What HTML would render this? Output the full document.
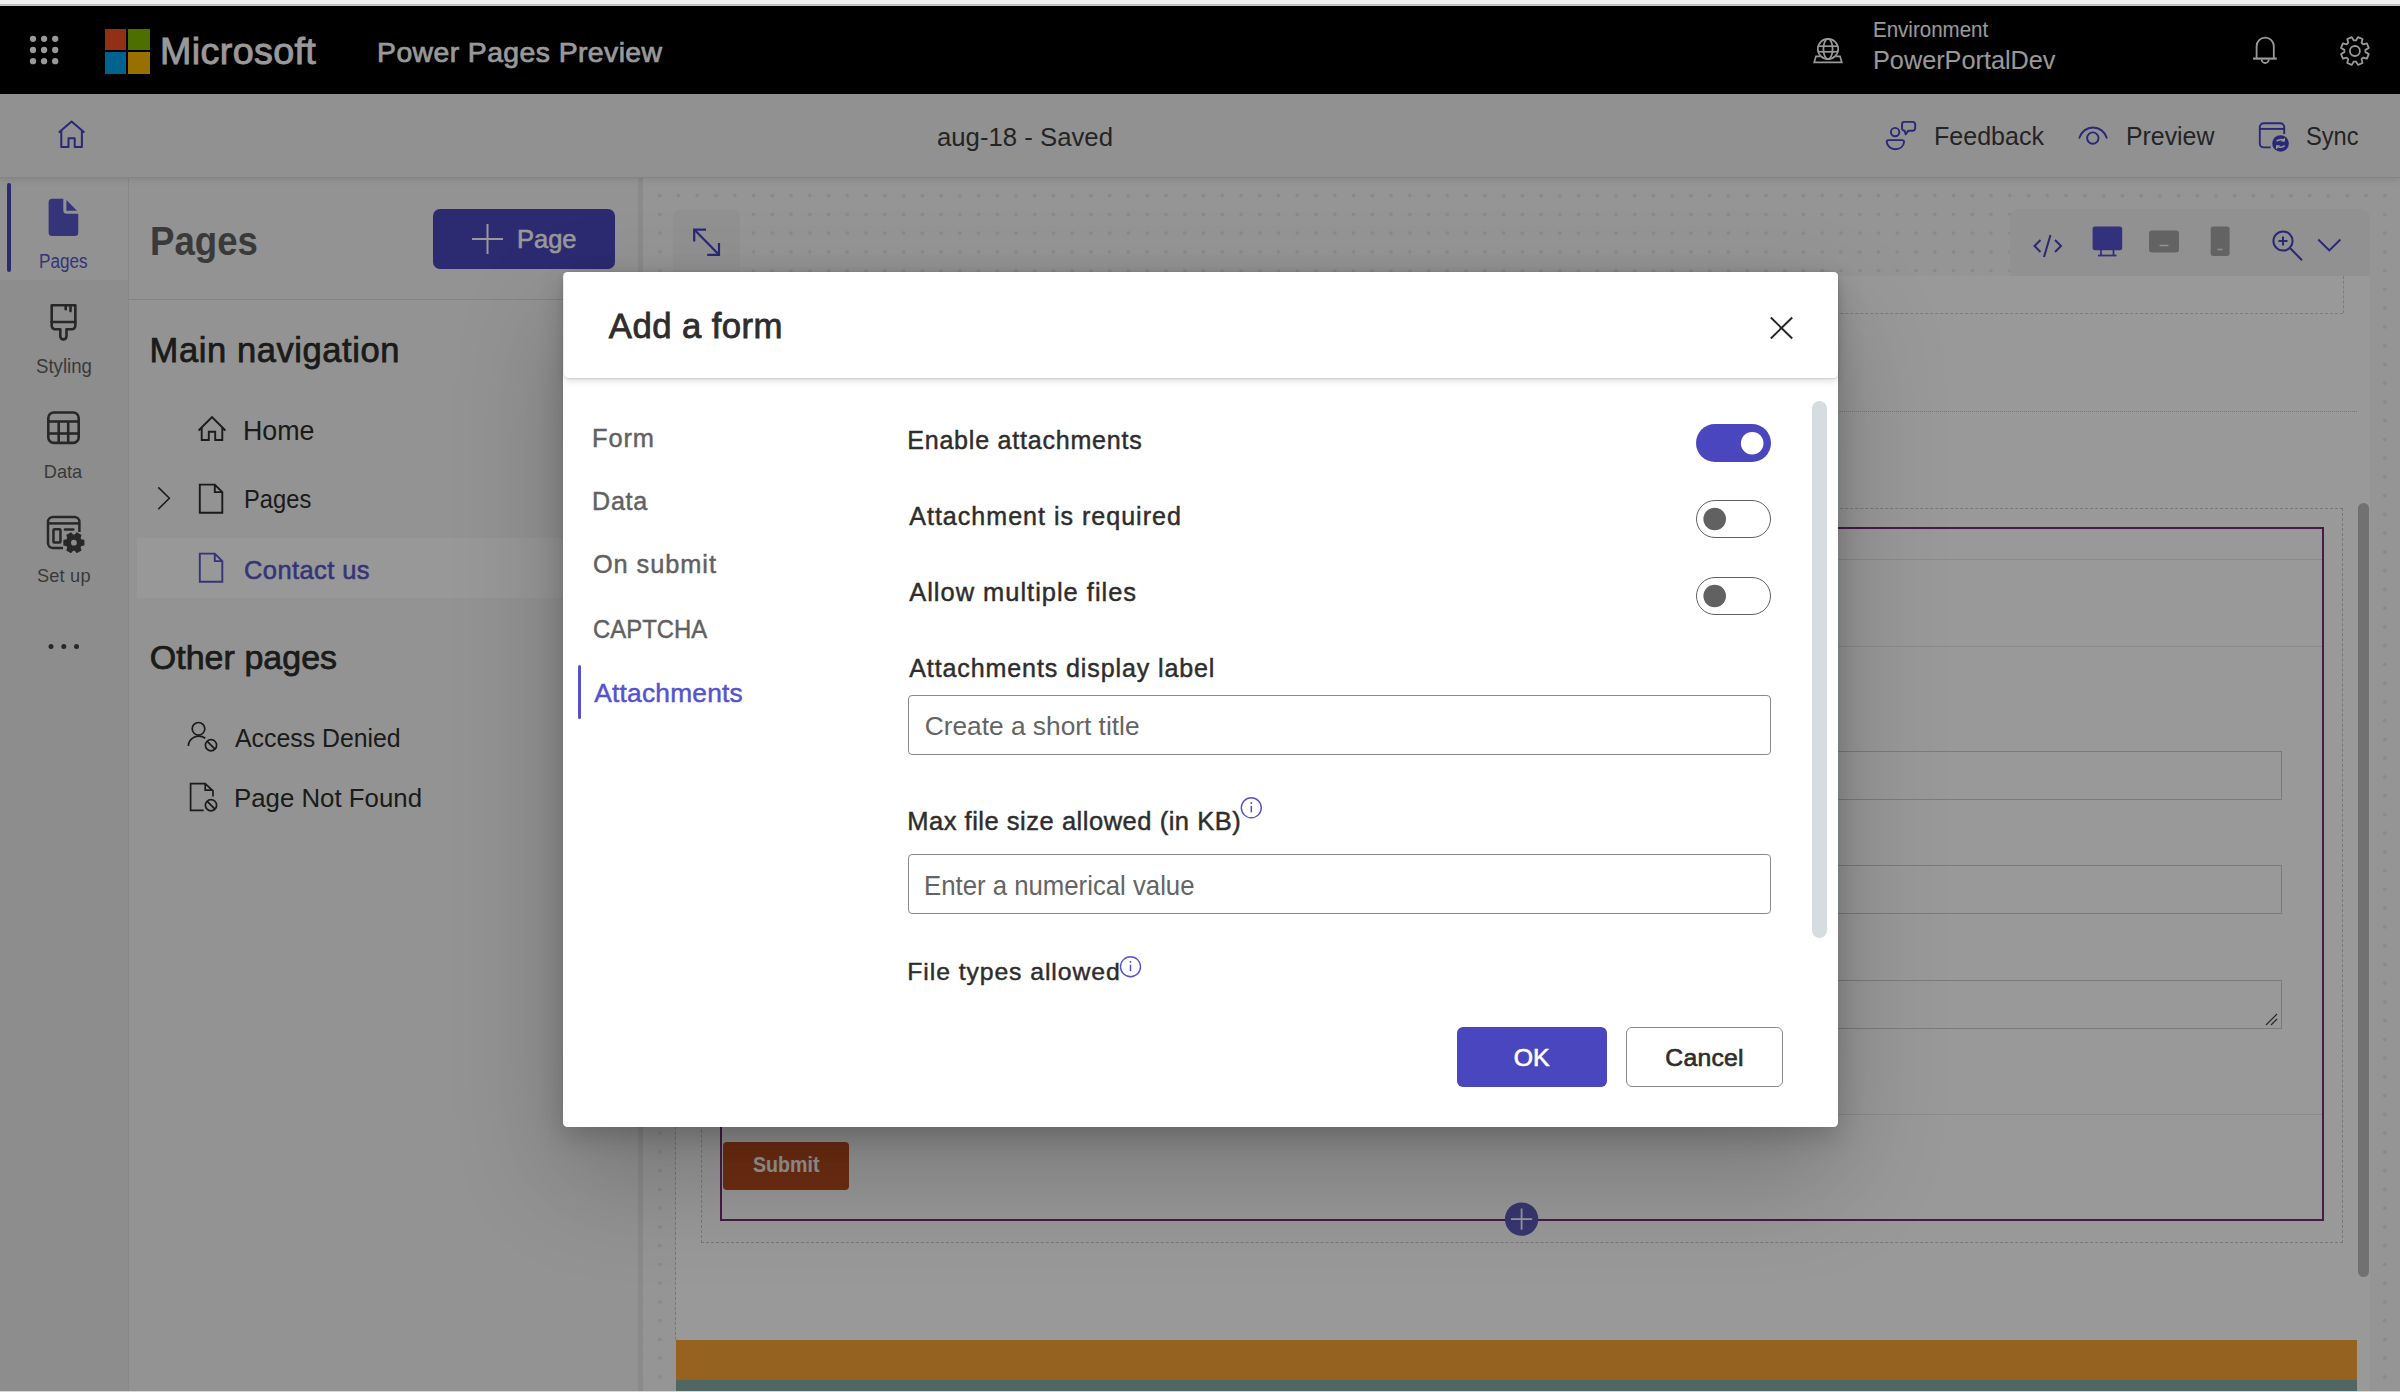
<!DOCTYPE html>
<html><head><meta charset="utf-8"><style>
html,body{margin:0;padding:0;width:2400px;height:1392px;overflow:hidden;background:#fff}
body{position:relative;font-family:"Liberation Sans",sans-serif}
.t{position:absolute;white-space:pre;transform-origin:0 0;z-index:1}
.ov{z-index:3}
.r{position:absolute;display:block}
#dlg{position:absolute;left:0;top:0;width:2400px;height:1392px;z-index:4}
</style></head><body>
<div class="r" style="left:0px;top:6px;width:2400.00px;height:88.00px;background:#000;"></div><div class="r" style="left:105px;top:29px;width:21.00px;height:21.00px;background:#f25022;"></div><div class="r" style="left:128px;top:29px;width:22.00px;height:21.00px;background:#7fba00;"></div><div class="r" style="left:105px;top:52px;width:21.00px;height:22.00px;background:#00a4ef;"></div><div class="r" style="left:128px;top:52px;width:22.00px;height:22.00px;background:#ffb900;"></div><div class="t" style="left:160.04px;top:23.25px;font-size:37.65px;line-height:56px;font-weight:400;color:#fff;letter-spacing:0.381px;-webkit-text-stroke:0.90px #fff;">Microsoft</div><div class="t" style="left:377.08px;top:31.05px;font-size:28.34px;line-height:43px;font-weight:400;color:#fff;letter-spacing:0.435px;-webkit-text-stroke:0.70px #fff;">Power Pages Preview</div><div class="t" style="left:1872.96px;top:12.90px;font-size:21.80px;line-height:33px;font-weight:400;color:#fff;transform:scaleX(0.9414);">Environment</div><div class="t" style="left:1872.58px;top:39.75px;font-size:26.38px;line-height:40px;font-weight:400;color:#fff;transform:scaleX(0.9577);">PowerPortalDev</div><div class="t" style="left:937.27px;top:117.80px;font-size:26.02px;line-height:39px;font-weight:400;color:#3d3d3d;transform:scaleX(0.9892);">aug-18 - Saved</div><div class="t" style="left:1933.60px;top:116.00px;font-size:26.60px;line-height:40px;font-weight:400;color:#3d3d3d;transform:scaleX(0.9412);">Feedback</div><div class="t" style="left:2126.31px;top:116.00px;font-size:26.60px;line-height:40px;font-weight:400;color:#3d3d3d;transform:scaleX(0.9345);">Preview</div><div class="t" style="left:2305.84px;top:117.00px;font-size:26.16px;line-height:39px;font-weight:400;color:#3d3d3d;transform:scaleX(0.9046);">Sync</div><div class="r" style="left:0px;top:178px;width:128.00px;height:1213.00px;background:#ececec;"></div><div class="r" style="left:0px;top:178px;width:128.00px;height:102.00px;background:#f3f3f3;"></div><div class="r" style="left:6.5px;top:183px;width:4.30px;height:88.60px;background:#4a46bd;border-radius:2px"></div><div class="t" style="left:39.23px;top:247.00px;font-size:19.33px;line-height:29px;font-weight:400;color:#5a58c8;transform:scaleX(0.8881);">Pages</div><div class="t" style="left:35.76px;top:351.20px;font-size:19.77px;line-height:30px;font-weight:400;color:#616161;transform:scaleX(0.9435);">Styling</div><div class="t" style="left:43.85px;top:459.00px;font-size:18.17px;line-height:27px;font-weight:400;color:#616161;">Data</div><div class="t" style="left:36.88px;top:563.20px;font-size:18.17px;line-height:27px;font-weight:400;color:#616161;letter-spacing:0.227px;">Set up</div><div class="r" style="left:128px;top:178px;width:510.00px;height:1213.00px;background:#f5f5f5;border-left:1px solid #e3e3e3;box-sizing:border-box"></div><div class="r" style="left:128px;top:298.5px;width:510.00px;height:1.20px;background:#dcdcdc;"></div><div class="r" style="left:638px;top:178px;width:5.00px;height:1213.00px;background:#e6e6e6;"></div><div class="t" style="left:149.62px;top:211.20px;font-size:40.99px;line-height:61px;font-weight:700;color:#616161;transform:scaleX(0.8934);">Pages</div><div class="r" style="left:433px;top:209px;width:182.00px;height:59.75px;background:#4a46bd;border-radius:7px"></div><div class="t" style="left:516.74px;top:220.03px;font-size:26.09px;line-height:39px;font-weight:400;color:#fff;transform:scaleX(0.9773);-webkit-text-stroke:0.55px #fff;">Page</div><div class="t" style="left:149.61px;top:323.62px;font-size:34.52px;line-height:52px;font-weight:400;color:#2e2d2c;letter-spacing:0.581px;-webkit-text-stroke:0.75px #2e2d2c;">Main navigation</div><div class="t" style="left:243.26px;top:410.30px;font-size:27.33px;line-height:41px;font-weight:400;color:#2e2d2c;transform:scaleX(0.9812);">Home</div><div class="t" style="left:243.50px;top:480.40px;font-size:26.02px;line-height:39px;font-weight:400;color:#2e2d2c;transform:scaleX(0.9114);">Pages</div><div class="r" style="left:137px;top:538px;width:501.00px;height:60.00px;background:#fdfdfd;"></div><div class="t" style="left:244.00px;top:550.62px;font-size:25.51px;line-height:38px;font-weight:400;color:#5a58c8;letter-spacing:0.410px;-webkit-text-stroke:0.55px #5a58c8;">Contact us</div><div class="t" style="left:149.75px;top:631.62px;font-size:33.94px;line-height:51px;font-weight:400;color:#2e2d2c;letter-spacing:0.063px;-webkit-text-stroke:0.75px #2e2d2c;">Other pages</div><div class="t" style="left:235.40px;top:718.70px;font-size:25.73px;line-height:39px;font-weight:400;color:#2e2d2c;transform:scaleX(0.9657);">Access Denied</div><div class="t" style="left:234.23px;top:779.10px;font-size:26.31px;line-height:39px;font-weight:400;color:#2e2d2c;transform:scaleX(0.9818);">Page Not Found</div><div class="r" style="left:643px;top:186px;width:1757.00px;height:1205.00px;background:#f8f8f8;background-image:radial-gradient(circle, #e4e4e4 1.6px, transparent 2.2px);background-size:18.75px 18.75px;background-position:7.4px 0.3px"></div><div class="r" style="left:643px;top:178px;width:1757.00px;height:8.00px;background:#f8f8f8;"></div><div class="r" style="left:673px;top:209px;width:67.00px;height:91.00px;background:#f2f2f2;border-radius:9px"></div><div class="r" style="left:2009.5px;top:208.8px;width:360.20px;height:66.90px;background:#f2f2f2;border-radius:9px 9px 0 0"></div><div class="r" style="left:676px;top:275.7px;width:1694.00px;height:1115.30px;background:#ffffff;"></div><div class="r" style="left:676px;top:311.5px;width:1667.00px;height:1.50px;background:transparent;border-bottom:1.5px dashed #cfcfcf"></div><div class="r" style="left:2341.5px;top:275.7px;width:1.50px;height:37.30px;background:transparent;border-right:1.5px dashed #cfcfcf"></div><div class="r" style="left:676px;top:408.6px;width:1681.00px;height:2.00px;background:transparent;border-bottom:1.6px dotted #c6c6c6"></div><div class="r" style="left:701px;top:508px;width:1642.00px;height:735.00px;background:transparent;border:1.2px dashed #c8c8c8;box-sizing:border-box"></div><div class="r" style="left:675px;top:275.7px;width:1.50px;height:1064.30px;background:transparent;border-left:1.2px dashed #c8c8c8"></div><div class="r" style="left:720px;top:527px;width:1604.00px;height:694.00px;background:transparent;border:2.5px solid #7a2c76;box-sizing:border-box"></div><div class="r" style="left:722px;top:558.5px;width:1600.00px;height:1.30px;background:#e6e6e6;"></div><div class="r" style="left:722px;top:646px;width:1600.00px;height:1.30px;background:#e6e6e6;"></div><div class="r" style="left:722px;top:1113.5px;width:1600.00px;height:1.30px;background:#e6e6e6;"></div><div class="r" style="left:1700px;top:751px;width:582.00px;height:49.00px;background:#fff;border:1.5px solid #cdcdcd;box-sizing:border-box"></div><div class="r" style="left:1700px;top:865px;width:582.00px;height:49.00px;background:#fff;border:1.5px solid #cdcdcd;box-sizing:border-box"></div><div class="r" style="left:1700px;top:980px;width:582.00px;height:49.00px;background:#fff;border:1.5px solid #cdcdcd;box-sizing:border-box"></div><div class="r" style="left:723.4px;top:1142px;width:125.20px;height:47.80px;background:#bb4e20;border-radius:4px"></div><div class="t" style="left:752.61px;top:1148.40px;font-size:22.38px;line-height:34px;font-weight:700;color:#fff;transform:scaleX(0.8761);">Submit</div><div class="r" style="left:2357.6px;top:503.4px;width:11.40px;height:773.60px;background:#bcbcbc;border-radius:6px"></div><div class="r" style="left:676px;top:1340px;width:1681.00px;height:39.50px;background:#f9a334;"></div><div class="r" style="left:676px;top:1379.5px;width:1681.00px;height:11.50px;background:#86aaa4;"></div><div class="r" style="left:0px;top:94px;width:2400.00px;height:84.00px;background:#f2f2f2;border-bottom:1.5px solid #dcdcdc;box-sizing:border-box;box-shadow:0 2px 7px rgba(0,0,0,.09)"></div><svg class="r" style="left:0;top:0;z-index:1" width="2400" height="1392" viewBox="0 0 2400 1392"><circle cx="33" cy="38.8" r="3.15" fill="#fff"/><circle cx="33" cy="50" r="3.15" fill="#fff"/><circle cx="33" cy="61.2" r="3.15" fill="#fff"/><circle cx="44.1" cy="38.8" r="3.15" fill="#fff"/><circle cx="44.1" cy="50" r="3.15" fill="#fff"/><circle cx="44.1" cy="61.2" r="3.15" fill="#fff"/><circle cx="55.2" cy="38.8" r="3.15" fill="#fff"/><circle cx="55.2" cy="50" r="3.15" fill="#fff"/><circle cx="55.2" cy="61.2" r="3.15" fill="#fff"/><g fill="none" stroke="#fff" stroke-width="1.7"><circle cx="1828" cy="49" r="10.2"/><ellipse cx="1828" cy="49" rx="4.6" ry="10.2"/><line x1="1818.5" y1="46.2" x2="1837.5" y2="46.2"/><line x1="1818.5" y1="51.8" x2="1837.5" y2="51.8"/><path d="M1820 56.3 H1816 L1814.2 62.3 H1841.8 L1840 56.3 H1836"/></g><g fill="none" stroke="#fff" stroke-width="1.8"><path d="M2256.6 58.3 V46.2 a8.6 8.6 0 0 1 17.2 0 V58.3"/><line x1="2253.1" y1="58.6" x2="2276.8" y2="58.6" stroke-width="2.2"/><path d="M2261.7 59.5 a3.5 3.5 0 0 0 7 0"/></g><path d="M2356.01 40.46 L2357.97 37.14 L2362.53 39.02 L2361.57 42.76 L2363.14 44.33 L2366.88 43.37 L2368.76 47.93 L2365.44 49.89 L2365.44 52.11 L2368.76 54.07 L2366.88 58.63 L2363.14 57.67 L2361.57 59.24 L2362.53 62.98 L2357.97 64.86 L2356.01 61.54 L2353.79 61.54 L2351.83 64.86 L2347.27 62.98 L2348.23 59.24 L2346.66 57.67 L2342.92 58.63 L2341.04 54.07 L2344.36 52.11 L2344.36 49.89 L2341.04 47.93 L2342.92 43.37 L2346.66 44.33 L2348.23 42.76 L2347.27 39.02 L2351.83 37.14 L2353.79 40.46 Z" fill="none" stroke="#fff" stroke-width="1.8" stroke-linejoin="round"/><circle cx="2354.9" cy="51" r="5" fill="none" stroke="#fff" stroke-width="1.8"/><path d="M58.8 132.5 L71.6 121.5 L84.4 132.5 M61.3 130.5 V147 H68.5 V138.2 H74.7 V147 H81.9 V130.5" fill="none" stroke="#4641c3" stroke-width="2" stroke-linejoin="round"/><g fill="none" stroke="#4641c3" stroke-width="1.9"><circle cx="1895.1" cy="132.1" r="4.2"/><path d="M1888.5 140.1 H1902.3 a1.8 1.8 0 0 1 1.8 1.8 C1903.6 146.5 1899.8 149.2 1895.4 149.2 C1891 149.2 1887.1 146.5 1886.7 141.9 a1.8 1.8 0 0 1 1.8 -1.8 Z"/><path d="M1904.5 121.9 H1912.7 a2.5 2.5 0 0 1 2.5 2.5 V128.2 a2.5 2.5 0 0 1 -2.5 2.5 H1908.4 L1905.6 134.3 L1904.7 130.7 a2.5 2.5 0 0 1 -2.7 -2.5 V124.4 a2.5 2.5 0 0 1 2.5 -2.5 Z" stroke-linejoin="round"/></g><g fill="none" stroke="#4641c3" stroke-width="1.9" stroke-linecap="round"><path d="M2079.4 137.8 A14.2 14.2 0 0 1 2106.7 137.8"/><circle cx="2092.8" cy="138.1" r="5.7"/></g><g fill="none" stroke="#4641c3" stroke-width="1.9"><path d="M2270.7 147.4 H2263.8 a4 4 0 0 1 -4 -4 V127.2 a4 4 0 0 1 4 -4 H2280.2 a4 4 0 0 1 4 4 V134.1"/><line x1="2259.8" y1="128.9" x2="2284.2" y2="128.9"/></g><circle cx="2280.55" cy="143.45" r="8.3" fill="#4641c3"/><g fill="none" stroke="#fff" stroke-width="1.6"><path d="M2276.6 141.3 a4.5 3 0 0 1 7.4 -0.6"/><path d="M2284.6 145.6 a4.5 3 0 0 1 -7.4 0.6"/></g><path d="M2285 137.5 V141.6 H2281 Z M2276 149.4 V145.3 H2280 Z" fill="#fff"/><path d="M48.6 202.3 a3.5 3.5 0 0 1 3.5 -3.5 H63.3 V210.2 a3.5 3.5 0 0 0 3.5 3.5 H78.25 V232.5 a3.5 3.5 0 0 1 -3.5 3.5 H52.1 a3.5 3.5 0 0 1 -3.5 -3.5 Z M66.4 200 L77 210.7 H66.4 Z" fill="#5a58c8"/><g fill="none" stroke="#424242" stroke-width="2.6" stroke-linejoin="round" stroke-linecap="round"><path d="M51.7 305.2 H75.35 V325.8 a3.5 3.5 0 0 1 -3.5 3.5 H66.5 V336.3 a3.1 3.1 0 0 1 -6.2 0 V329.3 H55.2 a3.5 3.5 0 0 1 -3.5 -3.5 Z"/><line x1="51.7" y1="322" x2="75.35" y2="322"/><line x1="65.7" y1="306" x2="65.7" y2="309.2"/><line x1="70.5" y1="306" x2="70.5" y2="311.1"/></g><g fill="none" stroke="#424242" stroke-width="2.6"><rect x="48.3" y="412.5" width="30.4" height="30.4" rx="5.5"/><line x1="48.3" y1="421.5" x2="78.7" y2="421.5"/><line x1="48.3" y1="433.5" x2="78.7" y2="433.5"/><line x1="58.7" y1="421.5" x2="58.7" y2="442.9"/><line x1="68.2" y1="421.5" x2="68.2" y2="442.9"/></g><g fill="none" stroke="#424242" stroke-width="2.5" stroke-linecap="round"><path d="M63 548.1 H53 a5 5 0 0 1 -5 -5 V521.9 a5 5 0 0 1 5 -5 H74.4 a5 5 0 0 1 5 5 V532" stroke-linecap="butt"/><line x1="48" y1="523.4" x2="79.4" y2="523.4" stroke-linecap="butt"/><rect x="53.45" y="529.25" width="7" height="13.2" rx="1"/><line x1="64.95" y1="529.4" x2="73.25" y2="529.4"/></g><path d="M80.95 539.85 L83.84 540.41 L83.84 544.99 L80.95 545.55 L79.89 547.38 L80.86 550.16 L76.88 552.45 L74.96 550.23 L72.84 550.23 L70.92 552.45 L66.94 550.16 L67.91 547.38 L66.85 545.55 L63.96 544.99 L63.96 540.41 L66.85 539.85 L67.91 538.02 L66.94 535.24 L70.92 532.95 L72.84 535.17 L74.96 535.17 L76.88 532.95 L80.86 535.24 L79.89 538.02 Z" fill="#424242" stroke="#424242" stroke-width="1.2" stroke-linejoin="round"/><circle cx="73.9" cy="542.7" r="2.9" fill="#ececec"/><circle cx="51" cy="646.5" r="2.5" fill="#424242"/><circle cx="63.8" cy="646.5" r="2.5" fill="#424242"/><circle cx="76.5" cy="646.5" r="2.5" fill="#424242"/><g stroke="#fff" stroke-width="2"><line x1="472" y1="239" x2="503" y2="239"/><line x1="487.5" y1="224" x2="487.5" y2="254"/></g><g fill="none" stroke="#2e2d2c" stroke-width="1.9"><path d="M198.6 430.5 L212 417.1 L225.4 430.5 M201.7 428 V440 H208.8 V431.7 H215.2 V440 H222.3 V428"/><path d="M158.3 487.4 L169.4 498.3 L158.3 509.1" stroke-width="1.5"/><path d="M199.8 484.6 H214.8 L222.3 492.1 V512.7 H199.8 Z M214.8 484.6 V492.1 H222.3"/></g><path d="M199.8 553.6 H214.8 L222.3 561.1 V581.7 H199.8 Z M214.8 553.6 V561.1 H222.3" fill="none" stroke="#5a58c8" stroke-width="1.9"/><g fill="none" stroke="#2e2d2c" stroke-width="1.7"><circle cx="198.5" cy="728.8" r="6.3"/><path d="M188.3 746 A10.6 10.6 0 0 1 205.3 738.3"/><circle cx="211" cy="745.2" r="5.6"/><line x1="207" y1="741.2" x2="215" y2="749.2"/><path d="M203.7 810.4 H190.6 V783.6 H205.2 L213 790.9 V796.6 M205.2 783.6 V790.2 H213"/><circle cx="211" cy="805.2" r="5.6"/><line x1="207" y1="801.2" x2="215" y2="809.2"/></g><g fill="none" stroke="#4641c3" stroke-width="2.2"><path d="M694.2 241.5 V229.6 H706"/><path d="M707.2 254.8 H719 V243"/><line x1="694.2" y1="229.6" x2="719" y2="254.8"/></g><g fill="none" stroke="#4641c3" stroke-width="2"><path d="M2040.5 240 L2034.5 246 L2040.5 252"/><path d="M2055 240 L2061 246 L2055 252"/><line x1="2050.5" y1="235" x2="2044" y2="257"/></g><rect x="2092.6" y="226.6" width="29.6" height="23.6" rx="2.5" fill="#5550d0"/><g stroke="#5550d0" stroke-width="1.8"><line x1="2101" y1="250" x2="2101" y2="255"/><line x1="2113.5" y1="250" x2="2113.5" y2="255"/><line x1="2098" y1="255.5" x2="2116.5" y2="255.5"/></g><rect x="2149" y="230.5" width="30" height="22" rx="3" fill="#a6a6a6"/><line x1="2159.5" y1="245.5" x2="2168.5" y2="245.5" stroke="#f2f2f2" stroke-width="1.5"/><rect x="2210.7" y="226.6" width="18.9" height="29.4" rx="2.5" fill="#a6a6a6"/><line x1="2217.5" y1="249.5" x2="2222.5" y2="249.5" stroke="#f2f2f2" stroke-width="1.5"/><g fill="none" stroke="#4641c3" stroke-width="2"><circle cx="2283" cy="241" r="9.6"/><line x1="2290" y1="248" x2="2302" y2="260.3"/><line x1="2278.5" y1="241" x2="2287.5" y2="241"/><line x1="2283" y1="236.5" x2="2283" y2="245.5"/></g><path d="M2318.2 239.5 L2329.3 250.5 L2340.4 239.5" fill="none" stroke="#4641c3" stroke-width="1.9"/><g stroke="#444" stroke-width="1.2"><line x1="2266" y1="1025" x2="2277" y2="1014"/><line x1="2271" y1="1025" x2="2277" y2="1019"/></g><circle cx="1521.6" cy="1219.1" r="16.7" fill="#5c5abb"/><g stroke="#fff" stroke-width="1.8"><line x1="1511" y1="1219.1" x2="1532.2" y2="1219.1"/><line x1="1521.6" y1="1208.5" x2="1521.6" y2="1229.7"/></g></svg><div class="r" style="left:0px;top:6px;width:2400.00px;height:1385.00px;background:rgba(0,0,0,0.4);z-index:3"></div><div class="r" style="left:0px;top:0px;width:2400.00px;height:4.00px;background:#f0f0f0;z-index:3"></div><div class="r" style="left:0px;top:4px;width:2400.00px;height:1.00px;background:#bdbdbd;z-index:3"></div><div class="r" style="left:0px;top:5px;width:2400.00px;height:1.00px;background:#c9c9c9;z-index:3"></div><div class="r" style="left:0px;top:1391px;width:2400.00px;height:1.00px;background:#d6d6d6;z-index:3"></div>
<div id="dlg"><div class="r" style="left:563px;top:272px;width:1275.00px;height:855.00px;background:#fff;border-radius:4.5px;box-shadow:0 48px 108px rgba(0,0,0,.22),0 9px 27px rgba(0,0,0,.18)"></div><div class="r" style="left:563.5px;top:272px;width:1274.00px;height:106.00px;background:#fff;border-radius:4.5px;box-shadow:0 3px 7px rgba(0,0,0,.13),0 0.6px 1.7px rgba(0,0,0,.11)"></div><div class="t" style="left:608.80px;top:299.50px;font-size:34.74px;line-height:52px;font-weight:400;color:#2e2d2c;letter-spacing:0.424px;-webkit-text-stroke:0.80px #2e2d2c;">Add a form</div><div class="r" style="left:1812px;top:401px;width:15.00px;height:537.00px;background:#d6dde1;border-radius:8px"></div><div class="t" style="left:592.10px;top:419.27px;font-size:25.36px;line-height:38px;font-weight:400;color:#616161;letter-spacing:0.901px;-webkit-text-stroke:0.45px #616161;">Form</div><div class="t" style="left:592.12px;top:481.77px;font-size:25.07px;line-height:38px;font-weight:400;color:#616161;letter-spacing:0.684px;-webkit-text-stroke:0.45px #616161;">Data</div><div class="t" style="left:592.98px;top:545.27px;font-size:25.36px;line-height:38px;font-weight:400;color:#616161;letter-spacing:0.924px;-webkit-text-stroke:0.45px #616161;">On submit</div><div class="t" style="left:592.93px;top:609.77px;font-size:25.65px;line-height:38px;font-weight:400;color:#616161;transform:scaleX(0.9318);-webkit-text-stroke:0.45px #616161;">CAPTCHA</div><div class="t" style="left:594.15px;top:674.15px;font-size:26.31px;line-height:39px;font-weight:400;color:#5552cf;letter-spacing:0.245px;-webkit-text-stroke:0.50px #5552cf;">Attachments</div><div class="r" style="left:578px;top:665px;width:3.00px;height:54.00px;background:#5552cf;border-radius:2px"></div><div class="t" style="left:907.22px;top:421.38px;font-size:25.07px;line-height:38px;font-weight:400;color:#2e2d2c;letter-spacing:0.767px;-webkit-text-stroke:0.45px #2e2d2c;">Enable attachments</div><div class="t" style="left:909.23px;top:497.38px;font-size:25.07px;line-height:38px;font-weight:400;color:#2e2d2c;letter-spacing:0.997px;-webkit-text-stroke:0.45px #2e2d2c;">Attachment is required</div><div class="t" style="left:909.23px;top:573.02px;font-size:25.44px;line-height:38px;font-weight:400;color:#2e2d2c;letter-spacing:1.001px;-webkit-text-stroke:0.45px #2e2d2c;">Allow multiple files</div><div class="t" style="left:909.23px;top:649.07px;font-size:25.07px;line-height:38px;font-weight:400;color:#2e2d2c;letter-spacing:0.874px;-webkit-text-stroke:0.45px #2e2d2c;">Attachments display label</div><div class="t" style="left:907.18px;top:801.77px;font-size:25.51px;line-height:38px;font-weight:400;color:#2e2d2c;letter-spacing:0.524px;-webkit-text-stroke:0.45px #2e2d2c;">Max file size allowed (in KB)</div><div class="t" style="left:907.24px;top:953.48px;font-size:24.78px;line-height:37px;font-weight:400;color:#2e2d2c;letter-spacing:0.921px;-webkit-text-stroke:0.45px #2e2d2c;">File types allowed</div><div class="r" style="left:1696px;top:424.3px;width:75.00px;height:37.70px;background:#4a46bd;border-radius:19px"></div><div class="r" style="left:1696px;top:500.2px;width:75.00px;height:37.70px;background:#fff;border:1.4px solid #616161;border-radius:19px;box-sizing:border-box"></div><div class="r" style="left:1696px;top:577.2px;width:75.00px;height:37.70px;background:#fff;border:1.4px solid #616161;border-radius:19px;box-sizing:border-box"></div><div class="r" style="left:908px;top:695px;width:863.00px;height:59.50px;background:#fff;border:1.5px solid #8a8a8a;border-radius:4px;box-sizing:border-box"></div><div class="r" style="left:908px;top:854px;width:863.00px;height:59.50px;background:#fff;border:1.5px solid #8a8a8a;border-radius:4px;box-sizing:border-box"></div><div class="t" style="left:924.69px;top:707.10px;font-size:26.31px;line-height:39px;font-weight:400;color:#646464;">Create a short title</div><div class="t" style="left:923.94px;top:864.70px;font-size:27.47px;line-height:41px;font-weight:400;color:#646464;transform:scaleX(0.9374);">Enter a numerical value</div><div class="r" style="left:1457px;top:1027px;width:150.00px;height:60.00px;background:#4a46bd;border-radius:6px"></div><div class="t" style="left:1513.81px;top:1039.38px;font-size:24.78px;line-height:37px;font-weight:400;color:#fff;-webkit-text-stroke:0.65px #fff;">OK</div><div class="r" style="left:1626px;top:1027px;width:157.00px;height:60.00px;background:#fff;border:1.5px solid #8a8a8a;border-radius:6px;box-sizing:border-box"></div><div class="t" style="left:1665.34px;top:1039.38px;font-size:24.78px;line-height:37px;font-weight:400;color:#2e2d2c;letter-spacing:0.236px;-webkit-text-stroke:0.65px #2e2d2c;">Cancel</div><svg class="r" style="left:0;top:0" width="2400" height="1392" viewBox="0 0 2400 1392"><g stroke="#242424" stroke-width="1.9"><line x1="1770.8" y1="317.5" x2="1792.2" y2="338.5"/><line x1="1792.2" y1="317.5" x2="1770.8" y2="338.5"/></g><circle cx="1752.2" cy="443.2" r="11.3" fill="#fff"/><circle cx="1714.7" cy="519.05" r="11.3" fill="#616161"/><circle cx="1714.7" cy="596.0500000000001" r="11.3" fill="#616161"/><circle cx="1251.3" cy="807.8" r="10" fill="none" stroke="#5552cf" stroke-width="1.4"/><line x1="1251.3" y1="805.8" x2="1251.3" y2="812.3" stroke="#5552cf" stroke-width="1.5"/><circle cx="1251.3" cy="803.0" r="0.95" fill="#5552cf"/><circle cx="1130.5" cy="966.7" r="10" fill="none" stroke="#5552cf" stroke-width="1.4"/><line x1="1130.5" y1="964.7" x2="1130.5" y2="971.2" stroke="#5552cf" stroke-width="1.5"/><circle cx="1130.5" cy="961.9000000000001" r="0.95" fill="#5552cf"/></svg></div>
</body></html>
